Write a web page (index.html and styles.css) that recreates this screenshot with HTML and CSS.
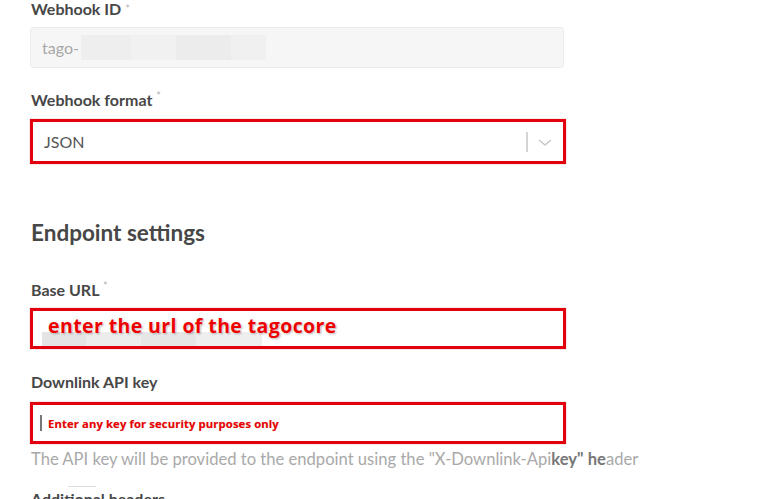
FILE: index.html
```html
<!DOCTYPE html>
<html>
<head>
<meta charset="utf-8">
<link rel="stylesheet" href="styles.css">
</head>
<body>
<div class="form">
  <div class="label l-id">Webhook ID <span class="req">*</span></div>
  <div class="input disabled">
    <span class="ph">tago-</span>
    <span class="blur"><i class="b1"></i><i class="b2"></i><i class="b3"></i><i class="b4"></i></span>
  </div>

  <div class="label l-format">Webhook format <span class="req">*</span></div>
  <div class="input red select">
    <span class="val">JSON</span>
    <span class="sep"></span>
    <svg class="chev" width="16" height="10" viewBox="0 0 16 10"><path d="M2 2 L8 7 L14 2" fill="none" stroke="#c8c8c8" stroke-width="1.6"/></svg>
  </div>

  <h2 class="heading">Endpoint settings</h2>

  <div class="label l-base">Base URL <span class="req">*</span></div>
  <div class="input red url">
    <span class="urlblur"></span>
    <span class="note big">enter the url of the tagocore</span>
  </div>

  <div class="label l-key">Downlink API key</div>
  <div class="input red key">
    <span class="caret"></span>
    <span class="note small">Enter any key for security purposes only</span>
  </div>
  <div class="help">The API key will be provided to the endpoint using the "X-Downlink-Api<b>key" he</b>ader</div>

  <div class="label l-add"><span class="tick"></span>Additional headers</div>
</div>
</body>
</html>
```

FILE: styles.css
```css
html, body {
  margin: 0;
  padding: 0;
  background: #ffffff;
  overflow: hidden;
}
body {
  font-family: "Source Sans Pro", Lato, "Open Sans", sans-serif;
  color: #4a4a4a;
}
.form {
  width: 536px;
  padding-left: 30px;
  display: flex;
  flex-direction: column;
}
.label {
  font-size: 16px;
  font-weight: 700;
  color: #474747;
  line-height: 20px;
  padding-left: 1px;
  position: relative;
}
.req {
  font-size: 11px;
  color: #b5b5b5;
  font-weight: 400;
  vertical-align: top;
  position: relative;
  top: -4px;
}
.l-id { margin-top: 0; line-height: 17px; }
.l-id .req { top: 0; }
.l-format { margin-top: 22px; }
.l-base { margin-top: 0; }
.l-key { margin-top: 23px; }
.l-add { margin-top: 19px; }
.input {
  box-sizing: border-box;
  display: flex;
  align-items: center;
  position: relative;
  background: #fff;
}
.disabled {
  margin-top: 10px;
  height: 41px;
  width: 534px;
  background: #f6f6f6;
  border: 1px solid #ececec;
  border-radius: 3px;
  padding-left: 11px;
}
.ph {
  font-size: 16px;
  color: #a8a8a8;
}
.blur {
  display: flex;
  height: 25px;
  margin-left: 2px;
}
.blur i {
  display: block;
  height: 25px;
}
.b1 { width: 50px; background: #eeeeee; }
.b2 { width: 45px; background: #f1f1f1; }
.b3 { width: 55px; background: #ececec; }
.b4 { width: 35px; background: #f0f0f0; }
.red {
  border: 3px solid #e2000f;
  width: 536px;
  box-shadow: 0 0 1px rgba(200,0,0,0.5);
}
.select {
  margin-top: 9px;
  height: 45px;
  padding-left: 11px;
}
.val {
  font-size: 16px;
  color: #555;
  flex: 1;
}
.sep {
  width: 2px;
  height: 20px;
  background: #d4d4d4;
  margin-right: 9px;
}
.chev {
  margin-right: 10px;
  margin-top: 2px;
}
.heading {
  margin: 56px 0 34px 1px;
  font-size: 22.5px;
  font-weight: 700;
  color: #474747;
  line-height: 26px;
}
.url {
  margin-top: 8px;
  height: 41px;
  padding-left: 15px;
}
.urlblur {
  position: absolute;
  left: 9px;
  top: 21px;
  width: 220px;
  height: 14px;
  background: linear-gradient(90deg, #e4e4e4 0 20%, #ececec 20% 45%, #e6e6e6 45% 70%, #eeeeee 70% 100%);
}
.note {
  color: #ee0000;
  font-weight: 700;
  font-family: "Open Sans", "Noto Sans", sans-serif;
  position: relative;
}
.big {
  font-size: 19.5px;
  letter-spacing: 0.4px;
  text-shadow: 0 0 2px #fff, 1px 1px 2px rgba(0,0,0,0.35);
  margin-top: -6px;
}
.key {
  margin-top: 10px;
  height: 42px;
  padding-left: 7px;
}
.caret {
  width: 2px;
  height: 16px;
  background: #777;
  margin-right: 6px;
}
.small {
  font-size: 11.3px;
  letter-spacing: 0.1px;
  text-shadow: 0 0 1px rgba(0,0,0,0.25);
}
.help {
  margin-top: 4px;
  font-size: 16.6px;
  color: #a9a9a9;
  line-height: 22px;
  padding-left: 1px;
  white-space: nowrap;
}
.help b {
  color: #777;
  font-weight: 700;
}
.tick {
  position: absolute;
  left: 38px;
  top: -3px;
  width: 28px;
  height: 1px;
  background: #dcdcdc;
}
```
